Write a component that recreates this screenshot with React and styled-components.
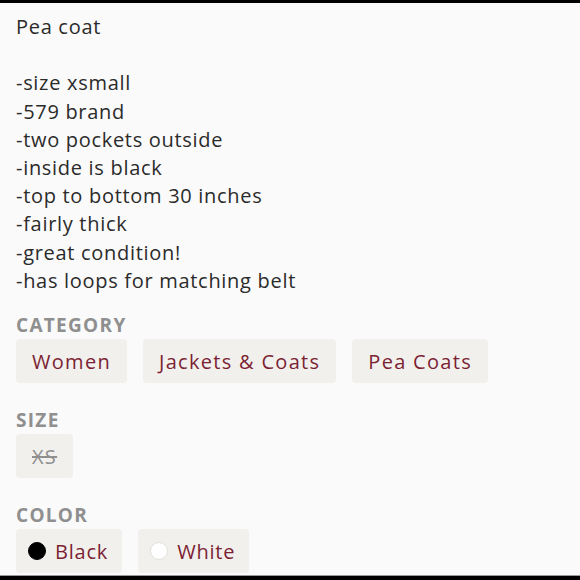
import React from "react";
import styled, { createGlobalStyle } from "styled-components";

const Global = createGlobalStyle`
  html, body { margin: 0; padding: 0; background: #fafafa; overflow: hidden; }
  * { box-sizing: border-box; }
`;

const Frame = styled.div`
  width: 580px;
  height: 580px;
  overflow: hidden;
  background: #fafafa;
  border-top: 3px solid #000;
  border-bottom: 4px solid #000;
  box-shadow: inset 0 -1px 0 #9a9a9a;
  padding: 10px 16px 0;
  font-family: "Open Sans", "Noto Sans", sans-serif;
`;

const Description = styled.div`
  font-size: 20px;
  line-height: 28.2px;
  letter-spacing: 0.7px;
  color: #2b2b2b;
  white-space: pre-line;
`;

const Section = styled.section`
  margin-top: ${(p) => p.$gap}px;
`;

const Label = styled.div`
  font-size: 19px;
  line-height: 24px;
  font-weight: 700;
  letter-spacing: 1.3px;
  color: #8f8f8f;
`;

const ChipRow = styled.div`
  display: flex;
  gap: 16px;
  margin-top: 2px;
`;

const Chip = styled.div`
  height: 44px;
  padding: ${(p) => (p.$dot ? "0 14px 0 12px" : "0 16px")};
  background: #f2f0ed;
  border-radius: 4px;
  display: flex;
  align-items: center;
  gap: 9px;
  font-size: 20px;
  letter-spacing: ${(p) => (p.$dot ? "0.8px" : "1.3px")};
  color: ${(p) => (p.$muted ? "#8f8f8f" : "#7b1f33")};
  text-decoration: ${(p) => (p.$muted ? "line-through" : "none")};
`;

const Dot = styled.span`
  width: 18px;
  height: 18px;
  border-radius: 50%;
  background: ${(p) => p.$color};
  border: 1px solid ${(p) => (p.$color === "#fff" ? "#e2e0dd" : "#000")};
`;

const text = `Pea coat

-size xsmall
-579 brand
-two pockets outside
-inside is black
-top to bottom 30 inches
-fairly thick
-great condition!
-has loops for matching belt`;

export default function App() {
  return (
    <>
      <Global />
      <Frame>
        <Description>{text}</Description>
        <Section $gap={18}>
          <Label>CATEGORY</Label>
          <ChipRow>
            <Chip>Women</Chip>
            <Chip>Jackets &amp; Coats</Chip>
            <Chip>Pea Coats</Chip>
          </ChipRow>
        </Section>
        <Section $gap={25}>
          <Label>SIZE</Label>
          <ChipRow>
            <Chip $muted>XS</Chip>
          </ChipRow>
        </Section>
        <Section $gap={25}>
          <Label>COLOR</Label>
          <ChipRow>
            <Chip $dot>
              <Dot $color="#000" />
              Black
            </Chip>
            <Chip $dot>
              <Dot $color="#fff" />
              White
            </Chip>
          </ChipRow>
        </Section>
      </Frame>
    </>
  );
}
